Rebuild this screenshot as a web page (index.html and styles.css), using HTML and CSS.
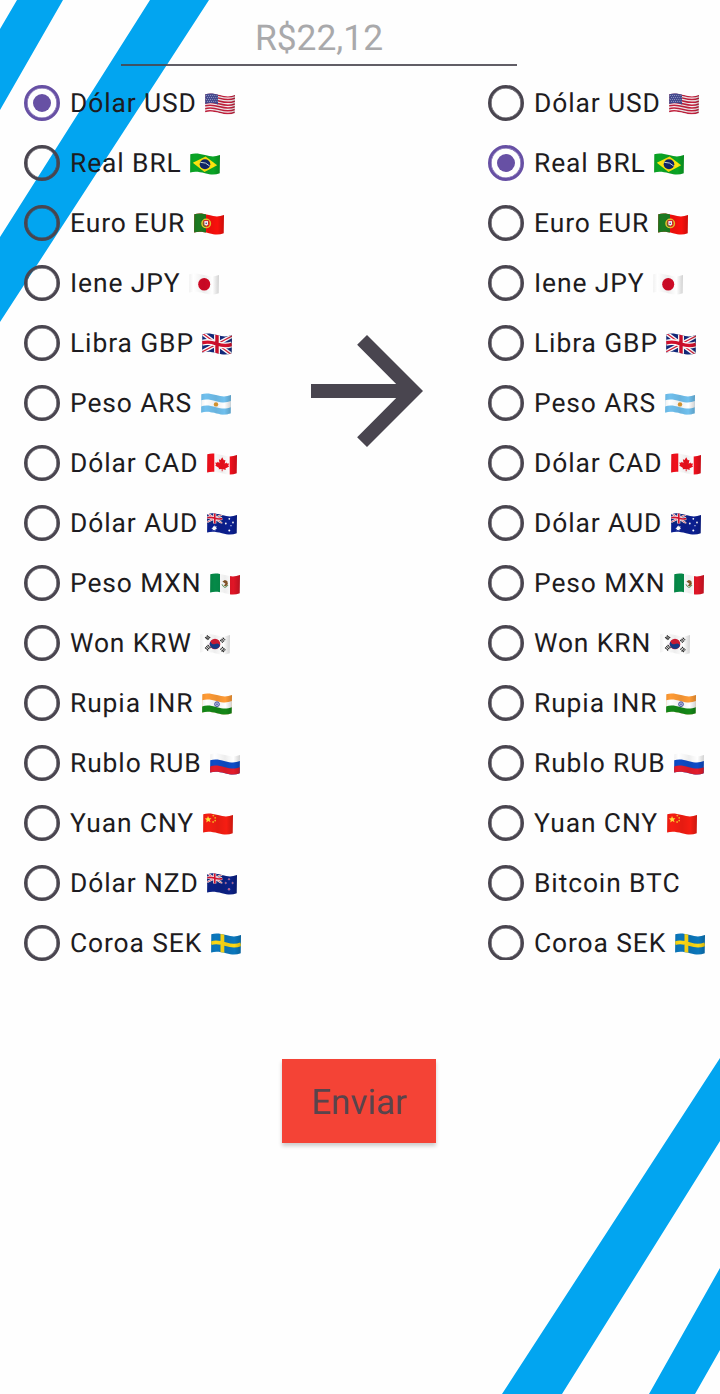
FILE: index.html
```
<!DOCTYPE html>
<html lang="pt-BR">
<head>
  <meta charset="UTF-8">
  <meta name="viewport" content="width=device-width, initial-scale=1.0">
  <title>Conversor de moedas</title>
  <link rel="stylesheet" href="styles.css">
</head>
<body>
  <svg class="fundo" viewBox="0 0 720 1394" aria-hidden="true">
    <path d="M17 0H63L0 110V29zM150 0H209L0 322V237zM720 1058V1141L562 1394H502zM720 1268V1350L695 1394H649z"/>
  </svg>

  <!-- bandeiras -->
  <svg class="defs" width="0" height="0" aria-hidden="true">
    <defs>
      <clipPath id="onda"><path d="M.3 1.2C5-.3 9 .4 15 2.1S25 3.9 30 2L29.7 20.2C25 22 21 21.8 15 20.2S5 18.2 .1 19.4z"/></clipPath>
      <linearGradient id="sombra">
        <stop offset="0" stop-color="#000" stop-opacity=".06"/>
        <stop offset=".15" stop-color="#000" stop-opacity="0"/>
        <stop offset=".5" stop-color="#000" stop-opacity=".07"/>
        <stop offset=".78" stop-color="#000" stop-opacity="0"/>
        <stop offset="1" stop-color="#000" stop-opacity=".18"/>
      </linearGradient>
      <path id="faixa" d="M0 1.2C5-.3 9 .4 15 2.1S25 3.9 30 2V30H0z"/>
      <path id="risco" d="M0 1.2C5-.3 9 .4 15 2.1S25 3.9 30 2" fill="none" stroke="#c41f3c" stroke-width="1.5"/>
      <g id="uniao">
        <path fill="#12297c" d="M0-1H30V23H0z"/>
        <path stroke="#fff" stroke-width="4" d="M0 0L30 22M0 19L30 3"/>
        <path stroke="#d5203a" stroke-width="1.3" d="M0 0L30 22M0 19L30 3"/>
        <path fill="none" stroke="#fff" stroke-width="6" d="M15-1V23M0 9.8C8 7.8 12 10 15 11S24 13.4 30 11.4"/>
        <path fill="none" stroke="#d5102d" stroke-width="3.4" d="M15-1V23M0 9.8C8 7.8 12 10 15 11S24 13.4 30 11.4"/>
      </g>
    </defs>

    <symbol id="us" viewBox="0 0 30 22">
      <g clip-path="url(#onda)">
        <path fill="#f5eef0" d="M0 0H30V22H0z"/>
        <use href="#risco" y=".5"/><use href="#risco" y="3.3"/><use href="#risco" y="6.1"/><use href="#risco" y="8.9"/><use href="#risco" y="11.7"/><use href="#risco" y="14.5"/><use href="#risco" y="17.3"/>
        <path fill="#454b91" d="M0 0H13V11.5C8 9.8 5 9.6 0 11z"/>
        <path stroke="#b9bcdc" stroke-width=".8" stroke-dasharray=".8 1.3" d="M1 2.5H13M2 4.5H13M1 6.5H13M2 8.5H13"/>
        <path fill="url(#sombra)" d="M0 0H30V22H0z"/>
      </g>
    </symbol>
    <symbol id="br" viewBox="0 0 30 22">
      <g clip-path="url(#onda)">
        <path fill="#0aa525" d="M0 0H30V22H0z"/>
        <path fill="#ffe60f" d="M2.8 9.8L15.6 3.6 27.2 12.2 14.5 19z"/>
        <ellipse cx="15" cy="11.2" rx="5.3" ry="5" fill="#11266a"/>
        <path fill="none" stroke="#cfe0df" stroke-width="1" d="M10.3 9.3Q16 9 19.7 13"/>
        <path fill="url(#sombra)" d="M0 0H30V22H0z"/>
      </g>
    </symbol>
    <symbol id="pt" viewBox="0 0 30 22">
      <g clip-path="url(#onda)">
        <path fill="#f9100c" d="M0 0H30V22H0z"/>
        <path fill="#1c7a20" d="M0 0H12V22H0z"/>
        <circle cx="12.2" cy="10.4" r="4.2" fill="none" stroke="#eac72d" stroke-width="1.5"/>
        <path fill="#fff" stroke="#dc2625" stroke-width="1" d="M9.9 7.6H14.5V11.3Q12.2 15 9.9 11.3z"/>
        <circle cx="12.2" cy="10.3" r=".8" fill="#27458f"/>
        <path fill="url(#sombra)" d="M0 0H30V22H0z"/>
      </g>
    </symbol>
    <symbol id="jp" viewBox="0 0 30 22">
      <g clip-path="url(#onda)">
        <path fill="#fff" d="M0 0H30V22H0z"/>
        <ellipse cx="15.2" cy="11.2" rx="6" ry="6.3" fill="#d40a26"/>
        <path fill="url(#sombra)" d="M0 0H30V22H0z"/>
      </g>
    </symbol>
    <symbol id="gb" viewBox="0 0 30 22">
      <g clip-path="url(#onda)">
        <use href="#uniao"/>
        <path fill="url(#sombra)" d="M0 0H30V22H0z"/>
      </g>
    </symbol>
    <symbol id="ar" viewBox="0 0 30 22">
      <g clip-path="url(#onda)">
        <path fill="#70c0ee" d="M0 0H30V22H0z"/>
        <use href="#faixa" y="6.1" fill="#fff"/>
        <use href="#faixa" y="12.2" fill="#70c0ee"/>
        <circle cx="15" cy="11.4" r="2.2" fill="#df9a31"/>
        <path fill="url(#sombra)" d="M0 0H30V22H0z"/>
      </g>
    </symbol>
    <symbol id="ca" viewBox="0 0 30 22">
      <g clip-path="url(#onda)">
        <path fill="#fff" d="M0 0H30V22H0z"/>
        <path fill="#f0101c" d="M0 0H7.3V22H0zM22.7 0H30V22H22.7z"/>
        <path fill="#f0101c" d="M15.2 4.2L13.6 7 11.9 6.2 12.5 10.1 10.6 8.7 10.1 9.8 8.2 9.5 9 11.8 8.2 12.5 12 15.1 11.7 16.3 14.7 16V18.2H15.6V16L18.8 17 18.4 15.6 22.2 13.5 21.3 12.8 22 10.5 20 10.5 19.4 9.5 17.7 10.7 18.4 6.9 16.8 7.3z"/>
        <path fill="url(#sombra)" d="M0 0H30V22H0z"/>
      </g>
    </symbol>
    <symbol id="au" viewBox="0 0 30 22">
      <g clip-path="url(#onda)">
        <path fill="#0b1f91" d="M0 0H30V22H0z"/>
        <svg x="0" y="0" width="15.5" height="10.6" viewBox="0 0 30 22" preserveAspectRatio="none"><use href="#uniao"/></svg>
        <path fill="#fff" d="M7.5 12.2l.7 1.4 1.6-.2-.7 1.4.9 1.2-1.5.3-.3 1.5-1.2-1-1.3.8.1-1.6-1.4-.8 1.5-.6.2-1.6 1 1.1z"/>
        <g fill="#fff"><circle cx="22.3" cy="5.8" r=".9"/><circle cx="18.8" cy="10.5" r=".9"/><circle cx="26" cy="9.5" r=".9"/><circle cx="22.3" cy="17.6" r="1"/><circle cx="24" cy="12.7" r=".6"/></g>
        <path fill="url(#sombra)" d="M0 0H30V22H0z"/>
      </g>
    </symbol>
    <symbol id="mx" viewBox="0 0 30 22">
      <g clip-path="url(#onda)">
        <path fill="#fff" d="M0 0H30V22H0z"/>
        <path fill="#058a48" d="M0 0H10V22H0z"/>
        <path fill="#e01526" d="M20 0H30V22H20z"/>
        <path fill="#875829" d="M12.4 8.5l2.5-1.6 2.4 1.2.6 3-1.7 2.2-2.5-.5 1.8-2z"/>
        <path fill="none" stroke="#589657" d="M12 11.3Q14.5 17 18.1 12"/>
        <path fill="url(#sombra)" d="M0 0H30V22H0z"/>
      </g>
    </symbol>
    <symbol id="kr" viewBox="0 0 30 22">
      <g clip-path="url(#onda)">
        <path fill="#fff" d="M0 0H30V22H0z"/>
        <circle cx="15" cy="11" r="5.3" fill="#d41c35"/>
        <path fill="#173c8b" d="M10.2 8.4Q12 12 15 11Q19 9.6 20 12.8A5.3 5.3 0 0 1 10.2 8.4"/>
        <path stroke="#222" stroke-width="1.1" stroke-dasharray="2 .4" d="M5.1 5.2L7.8 2.5M6.3 6L9 3.3M7.5 6.9L10.2 4.1M20.3 16.7L23 14M21.5 18.4L24.3 15.2M22.8 19L25.4 16.3M5.1 14.5L8.1 17.5M6.3 13.2L9.3 16.2M7.6 12L10.5 15M20.2 7L22.8 9.7M21.5 5.9L24 8.5M22.7 4.6L25.2 7.2"/>
        <path fill="url(#sombra)" d="M0 0H30V22H0z"/>
      </g>
    </symbol>
    <symbol id="in" viewBox="0 0 30 22">
      <g clip-path="url(#onda)">
        <path fill="#ff9b35" d="M0 0H30V22H0z"/>
        <use href="#faixa" y="6.1" fill="#fff"/>
        <use href="#faixa" y="12.2" fill="#148817"/>
        <circle cx="15" cy="11.2" r="2.4" fill="#c0c5e9" stroke="#33409b" stroke-width=".8"/>
        <circle cx="15" cy="11.2" r=".7" fill="#33409b"/>
        <path fill="url(#sombra)" d="M0 0H30V22H0z"/>
      </g>
    </symbol>
    <symbol id="ru" viewBox="0 0 30 22">
      <g clip-path="url(#onda)">
        <path fill="#fff" d="M0 0H30V22H0z"/>
        <use href="#faixa" y="6.1" fill="#0d4cc8"/>
        <use href="#faixa" y="12.2" fill="#e41c2c"/>
        <path fill="url(#sombra)" d="M0 0H30V22H0z"/>
      </g>
    </symbol>
    <symbol id="cn" viewBox="0 0 30 22">
      <g clip-path="url(#onda)">
        <path fill="#f61d12" d="M0 0H30V22H0z"/>
        <path fill="#ffe03b" d="M5 3l1 2.3 2.4-.1-1.7 1.7.9 2.4-2.3-1.2-2 1.5.4-2.5-2-1.5 2.5-.3z"/>
        <g fill="#fbb521"><circle cx="10.3" cy="2.6" r=".9"/><circle cx="12.2" cy="4.8" r=".9"/><circle cx="12.2" cy="7.6" r=".9"/><circle cx="10.1" cy="9" r=".9"/></g>
        <path fill="url(#sombra)" d="M0 0H30V22H0z"/>
      </g>
    </symbol>
    <symbol id="nz" viewBox="0 0 30 22">
      <g clip-path="url(#onda)">
        <path fill="#0b2085" d="M0 0H30V22H0z"/>
        <svg x="0" y="0" width="15.5" height="10.6" viewBox="0 0 30 22" preserveAspectRatio="none"><use href="#uniao"/></svg>
        <g fill="#e5355b" stroke="#c7c4e5" stroke-width=".4"><circle cx="22" cy="6.3" r=".8"/><circle cx="18.7" cy="10" r=".8"/><circle cx="25.6" cy="10" r=".8"/><circle cx="22" cy="16.3" r="1"/></g>
        <path fill="url(#sombra)" d="M0 0H30V22H0z"/>
      </g>
    </symbol>
    <symbol id="se" viewBox="0 0 30 22">
      <g clip-path="url(#onda)">
        <path fill="#0b78bd" d="M0 0H30V22H0z"/>
        <path fill="none" stroke="#ffd914" stroke-width="3.8" d="M11.4 0V22M0 10.2C5 8.5 9 9.3 15 11.3S25 13.4 30 11.2"/>
        <path fill="url(#sombra)" d="M0 0H30V22H0z"/>
      </g>
    </symbol>
  </svg>

  <form class="conversor">
    <input class="valor" type="text" placeholder="R$22,12">

    <div class="moedas">
      <div class="lista">
        <label><input type="radio" name="de" checked>Dólar USD <svg class="bandeira"><use href="#us"/></svg></label>
        <label><input type="radio" name="de">Real BRL <svg class="bandeira"><use href="#br"/></svg></label>
        <label><input type="radio" name="de">Euro EUR <svg class="bandeira"><use href="#pt"/></svg></label>
        <label><input type="radio" name="de">Iene JPY <svg class="bandeira"><use href="#jp"/></svg></label>
        <label><input type="radio" name="de">Libra GBP <svg class="bandeira"><use href="#gb"/></svg></label>
        <label><input type="radio" name="de">Peso ARS <svg class="bandeira"><use href="#ar"/></svg></label>
        <label><input type="radio" name="de">Dólar CAD <svg class="bandeira"><use href="#ca"/></svg></label>
        <label><input type="radio" name="de">Dólar AUD <svg class="bandeira"><use href="#au"/></svg></label>
        <label><input type="radio" name="de">Peso MXN <svg class="bandeira"><use href="#mx"/></svg></label>
        <label><input type="radio" name="de">Won KRW <svg class="bandeira"><use href="#kr"/></svg></label>
        <label><input type="radio" name="de">Rupia INR <svg class="bandeira"><use href="#in"/></svg></label>
        <label><input type="radio" name="de">Rublo RUB <svg class="bandeira"><use href="#ru"/></svg></label>
        <label><input type="radio" name="de">Yuan CNY <svg class="bandeira"><use href="#cn"/></svg></label>
        <label><input type="radio" name="de">Dólar NZD <svg class="bandeira"><use href="#nz"/></svg></label>
        <label><input type="radio" name="de">Coroa SEK <svg class="bandeira"><use href="#se"/></svg></label>
      </div>

      <svg class="seta" viewBox="0 0 24 24"><path d="M12 4l-1.41 1.41L16.17 11H4v2h12.17l-5.58 5.59L12 20l8-8z"/></svg>

      <div class="lista para">
        <label><input type="radio" name="para">Dólar USD <svg class="bandeira"><use href="#us"/></svg></label>
        <label><input type="radio" name="para" checked>Real BRL <svg class="bandeira"><use href="#br"/></svg></label>
        <label><input type="radio" name="para">Euro EUR <svg class="bandeira"><use href="#pt"/></svg></label>
        <label><input type="radio" name="para">Iene JPY <svg class="bandeira"><use href="#jp"/></svg></label>
        <label><input type="radio" name="para">Libra GBP <svg class="bandeira"><use href="#gb"/></svg></label>
        <label><input type="radio" name="para">Peso ARS <svg class="bandeira"><use href="#ar"/></svg></label>
        <label><input type="radio" name="para">Dólar CAD <svg class="bandeira"><use href="#ca"/></svg></label>
        <label><input type="radio" name="para">Dólar AUD <svg class="bandeira"><use href="#au"/></svg></label>
        <label><input type="radio" name="para">Peso MXN <svg class="bandeira"><use href="#mx"/></svg></label>
        <label><input type="radio" name="para">Won KRN <svg class="bandeira"><use href="#kr"/></svg></label>
        <label><input type="radio" name="para">Rupia INR <svg class="bandeira"><use href="#in"/></svg></label>
        <label><input type="radio" name="para">Rublo RUB <svg class="bandeira"><use href="#ru"/></svg></label>
        <label><input type="radio" name="para">Yuan CNY <svg class="bandeira"><use href="#cn"/></svg></label>
        <label><input type="radio" name="para">Bitcoin BTC</label>
        <label><input type="radio" name="para">Coroa SEK <svg class="bandeira"><use href="#se"/></svg></label>
      </div>
    </div>

    <button class="enviar" type="button">Enviar</button>
  </form>
</body>
</html>
```
FILE: styles.css
```
* {
  box-sizing: border-box;
}

body {
  margin: 0;
  background-color: #fefefe;
  font-family: Roboto, sans-serif;
  color: #1d1b20;
  text-rendering: geometricPrecision;
}

/* faixas azuis atras do conteudo */
.fundo {
  position: absolute;
  top: 0;
  left: 0;
  width: 720px;
  height: 1394px;
  z-index: -1;
  fill: #02a5f0;
}

.defs {
  display: block;
}

.conversor {
  display: flex;
  flex-direction: column;
  width: 720px;
  height: 1394px;
  overflow: hidden;
}

.valor {
  width: 396px;
  height: 66px;
  margin: 0 0 7px 121px;
  padding: 12px 0 0;
  border: 0;
  border-bottom: 2px solid #49454fdd;
  background: transparent;
  font: 35.4px Roboto, sans-serif;
  text-align: center;
  text-rendering: geometricPrecision;
  outline: none;
}

.valor::placeholder {
  color: #a9a9ab;
  opacity: 1;
}

.moedas {
  display: grid;
  grid-template-columns: 259px 205px 1fr;
  padding-left: 24px;
}

.lista label {
  display: flex;
  align-items: center;
  height: 60px;
  padding-top: 2px;
  font-size: 26.4px;
  letter-spacing: 0.9px;
  white-space: pre;
}

/* a segunda lista corta a base do ultimo botao */
.para {
  clip-path: inset(0 0 13px);
}

.lista input {
  appearance: none;
  display: grid;
  place-items: center;
  flex: none;
  width: 36px;
  height: 36px;
  margin: -2px 10px 0 0;
  border: 3px solid #49454f;
  border-radius: 50%;
  box-shadow: inset 0 0 0 0.6px #49454f;
}

.lista input:checked {
  border-color: #6750a4;
  box-shadow: inset 0 0 0 0.6px #6750a4;
}

.lista input:checked::before {
  content: "";
  width: 18px;
  height: 18px;
  border-radius: 50%;
  background-color: #6750a4;
}

.bandeira {
  flex: none;
  width: 30px;
  height: 22px;
  margin: 0 0 0 1px;
}

.seta {
  width: 168px;
  height: 168px;
  margin-top: 234px;
  fill: #49454f;
}

.enviar {
  width: 154px;
  height: 84px;
  margin: 86px 0 0 282px;
  padding: 3px 0 0;
  border: 0;
  background-color: #f44336;
  box-shadow: 0 3px 4px rgba(0, 0, 0, 0.2);
  color: #59444c;
  font: 35px Roboto, sans-serif;
  text-rendering: geometricPrecision;
}
```
